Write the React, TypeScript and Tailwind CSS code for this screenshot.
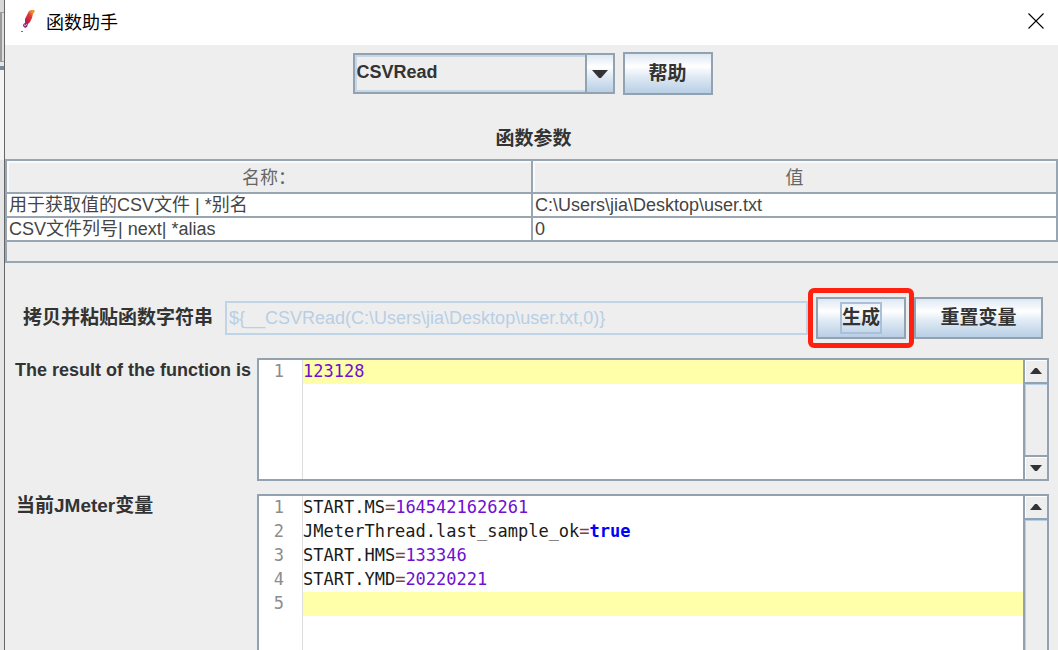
import { useState } from "react";

interface Token {
  text: string;
  kind?: "number" | "operator" | "keyword";
}

interface Param {
  name: string;
  value: string;
}

const params: Param[] = [
  { name: "用于获取值的CSV文件 | *别名", value: "C:\\Users\\jia\\Desktop\\user.txt" },
  { name: "CSV文件列号| next| *alias", value: "0" },
];

const resultLines: Token[][] = [[{ text: "123128", kind: "number" }]];

const variableLines: Token[][] = [
  [{ text: "START.MS" }, { text: "=", kind: "operator" }, { text: "1645421626261", kind: "number" }],
  [{ text: "JMeterThread.last_sample_ok" }, { text: "=", kind: "operator" }, { text: "true", kind: "keyword" }],
  [{ text: "START.HMS" }, { text: "=", kind: "operator" }, { text: "133346", kind: "number" }],
  [{ text: "START.YMD" }, { text: "=", kind: "operator" }, { text: "20220221", kind: "number" }],
  [],
];

const tokenColors = {
  number: "text-[#7010d0]",
  operator: "text-[#804040]",
  keyword: "font-bold text-[#0000ff]",
};

const metal =
  "border-2 border-[#92a2b1] bg-[linear-gradient(to_bottom,#dde8f3_0%,#ffffff_32%,#dde8f3_60%,#b8cfe5_100%)]";

const headCell =
  "border-r-2 border-b-2 border-[#98a6b3] pt-0.5 text-center font-normal text-[#666666] shadow-[inset_2px_2px_0_#fafafa]";

const bodyCell = "border-r-2 border-b-2 border-[#98a6b3] p-0 pl-0.5";

function ScrollButton({ up, label }: { up?: boolean; label: string }) {
  return (
    <button
      type="button"
      aria-label={label}
      className={`flex h-6 w-full shrink-0 items-center justify-center border-[#92a2b1] bg-[#eeeeee] shadow-[inset_1px_1px_0_#ffffff] ${up ? "border-b-2" : "border-t-2"}`}
    >
      <svg width="12" height="6" viewBox="0 0 12 6" fill="#333333">
        <path d={up ? "M0 6L5 0H7L12 6Z" : "M0 0H12L7 6H5Z"} />
      </svg>
    </button>
  );
}

function Editor({ lines, active, cut }: { lines: Token[][]; active: number; cut?: boolean }) {
  return (
    <div className={`flex h-full border-2 border-[#92a2b1] bg-white ${cut ? "border-b-0" : ""}`}>
      <div className="flex min-w-0 flex-1 flex-col font-['DejaVu_Sans_Mono',monospace] text-[17px] leading-[22px]">
        {lines.map((line, index) => (
          <div key={index} className="flex h-6">
            <span className="w-11 shrink-0 border-r border-[#dddddd] pr-[18px] text-right text-[#8c8c8c]">
              {index + 1}
            </span>
            <code
              className={`flex-1 font-[inherit] whitespace-pre text-[#1a1a1a] ${index === active ? "bg-[#ffffaa]" : ""}`}
            >
              {line.map((token, i) => (
                <span key={i} className={token.kind && tokenColors[token.kind]}>
                  {token.text}
                </span>
              ))}
            </code>
          </div>
        ))}
        <div className="w-11 flex-1 border-r border-[#dddddd]" />
      </div>
      <div className="flex w-6 flex-col border-l-2 border-[#92a2b1] bg-[#eeeeee]">
        <ScrollButton up label="Scroll up" />
        <div className="flex-1 border-t border-l border-[#b8cfe5]" />
        {!cut && <ScrollButton label="Scroll down" />}
      </div>
    </div>
  );
}

export default function App() {
  const [fn, setFn] = useState("CSVRead");

  return (
    <div className="flex h-screen overflow-hidden bg-[#eeeeee] font-['Liberation_Sans','Noto_Sans_CJK_SC',sans-serif] text-lg leading-6 text-[#333333]">
      {/* Sliver of the main window behind the dialog */}
      <div className="flex w-1 shrink-0 flex-col bg-[#e6e6e6]">
        <div className="h-3 bg-[#d8d8d8]" />
        <div className="h-[50px] border-y border-l-2 border-[#9a9a9a] bg-[#dddddd]" />
        <div className="mt-1 h-1 bg-[#7a8a99]" />
        <div className="h-[90px] bg-[#f4f4f4]" />
      </div>

      <div className="flex min-w-0 flex-1 flex-col border-l border-[#666666]">
        <header className="flex h-[45px] shrink-0 items-center bg-white pr-[13px] pb-1 pl-4 text-black">
          <svg width="15" height="24" viewBox="0 0 15 24" aria-hidden="true">
            <defs>
              <linearGradient id="feather" x1="1" y1="0" x2="0.3" y2="1">
                <stop offset="0" stopColor="#f6a02d" />
                <stop offset="0.2" stopColor="#f08a30" />
                <stop offset="0.4" stopColor="#dc3b35" />
                <stop offset="0.7" stopColor="#c92040" />
                <stop offset="1" stopColor="#7d2f8c" />
              </linearGradient>
            </defs>
            <path d="M8 2L10 1L13 1L14 2L12 5L11 9L9 13L7 15L6 18L4 19L2 17L2 15L4 14L4 10L6 6Z" fill="url(#feather)" />
            <path d="M2 14L4 17L6 15" stroke="#ffffff" strokeWidth="0.6" fill="none" />
            <path d="M0 22H2V23H0Z" fill="#7a5fbe" />
          </svg>
          <h1 className="ml-[10px] flex-1 font-['Noto_Sans_CJK_SC',sans-serif]">函数助手</h1>
          <button type="button" aria-label="Close" className="p-px">
            <svg width="16" height="16" viewBox="0 0 16 16" stroke="#000000" strokeWidth="1.1">
              <path d="M0.5 0.5L15.5 15.5M15.5 0.5L0.5 15.5" />
            </svg>
          </button>
        </header>

        <main className="flex min-h-0 flex-1 flex-col">
          <div className="mt-[7px] flex items-center justify-center gap-2 pl-0.5">
            <div className="relative h-[41px] w-[262px]">
              <select
                aria-label="函数"
                value={fn}
                onChange={(e) => setFn(e.target.value)}
                className="h-full w-full appearance-none border-2 border-[#92a2b1] bg-[#eeeeee] pb-1 pl-0.5 font-bold inset-ring-2 inset-ring-[#c6d7e8]"
              >
                <option>CSVRead</option>
              </select>
              <span
                className={`pointer-events-none absolute top-0 right-0 flex h-full w-[30px] items-center justify-center ${metal}`}
              >
                <svg width="16" height="8" viewBox="0 0 16 8" fill="#333333">
                  <path d="M0 0H16L9 8H7Z" />
                </svg>
              </span>
            </div>
            <button type="button" className={`h-[43px] w-[90px] text-[19px] font-bold ${metal}`}>
              帮助
            </button>
          </div>

          <h2 className="mt-8 pl-1 text-center text-[19px] font-bold">函数参数</h2>

          <div className="mt-2 h-[104px] shrink-0 border-2 border-r-0 border-[#98a6b3]">
            <table className="w-full table-fixed border-collapse text-left">
              <thead>
                <tr className="h-8">
                  <th className={headCell}>名称：</th>
                  <th className={headCell}>值</th>
                </tr>
              </thead>
              <tbody>
                {params.map((param) => (
                  <tr key={param.name} className="h-6 bg-white leading-[22px] text-[#444444]">
                    <td className={bodyCell}>{param.name}</td>
                    <td className={bodyCell}>{param.value}</td>
                  </tr>
                ))}
              </tbody>
            </table>
          </div>

          <div className="mt-[25px] flex items-center pr-[15px] pl-[18px]">
            <label htmlFor="fn-string" className="mr-3 text-[19px] font-bold">
              拷贝并粘贴函数字符串
            </label>
            <input
              id="fn-string"
              readOnly
              value="${__CSVRead(C:\Users\jia\Desktop\user.txt,0)}"
              className="h-[34px] min-w-0 flex-1 border-2 border-[#c0d4e8] bg-[#eeeeee] px-0.5 text-[#b8cfe5]"
            />
            <div className="shrink-0 rounded-md border-5 border-[#ff2010] px-[3px] py-1">
              <button
                type="button"
                className={`flex h-[42px] w-[90px] items-center justify-center text-[19px] font-bold ${metal}`}
              >
                <span className="border-2 border-[#a9c0d8] py-0.5">生成</span>
              </button>
            </div>
            <button type="button" className={`h-[42px] w-[129px] shrink-0 text-[19px] font-bold ${metal}`}>
              重置变量
            </button>
          </div>

          <div className="mt-[10px] grid min-h-0 flex-1 grid-cols-[242px_1fr] grid-rows-[123px_1fr] gap-x-[10px] gap-y-[13px] pr-[9px]">
            <h3 className="pl-[10px] font-bold whitespace-nowrap">The result of the function is</h3>
            <Editor lines={resultLines} active={0} />
            <h3 className="pl-[11px] text-[19px] font-bold whitespace-nowrap">当前JMeter变量</h3>
            <Editor lines={variableLines} active={4} cut />
          </div>
        </main>
      </div>
    </div>
  );
}
